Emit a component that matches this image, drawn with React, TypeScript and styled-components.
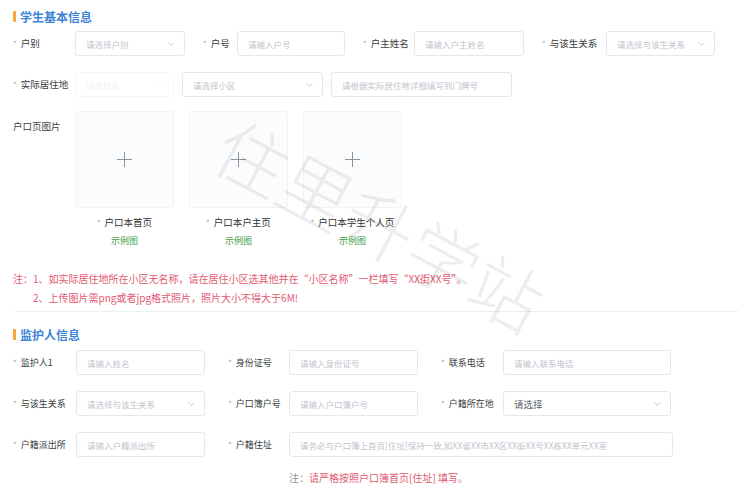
import React from 'react';
import styled, { createGlobalStyle } from 'styled-components';

const GlobalStyle = createGlobalStyle`
  html, body {
    margin: 0;
    padding: 0;
    background: #ffffff;
  }
  body {
    font-family: "Noto Sans CJK SC", "Noto Sans", "Liberation Sans", sans-serif;
    color: #303133;
  }
`;

const Page = styled.div`
  position: relative;
  width: 738px;
  height: 489px;
  overflow: hidden;
  box-sizing: border-box;
  padding: 9px 0 0 13px;
`;

const SectionTitle = styled.h3<{ $top?: number }>`
  display: flex;
  align-items: center;
  gap: 4px;
  margin: ${({ $top }) => $top ?? 0}px 0 0;
  height: 14px;
  font-size: 12px;
  font-weight: 700;
  color: #3d84d6;
  &::before {
    content: '';
    width: 3px;
    height: 11px;
    border-radius: 1px;
    background: #f3a93a;
  }
`;

const FormRow = styled.div<{ $top: number; $gap?: number }>`
  display: flex;
  align-items: center;
  margin-top: ${({ $top }) => $top}px;
  gap: ${({ $gap }) => $gap ?? 18}px;
`;

const Field = styled.div`
  display: flex;
  align-items: center;
`;

const Label = styled.label<{ $w: number; $size?: number }>`
  flex: none;
  width: ${({ $w }) => $w}px;
  font-size: ${({ $size }) => $size ?? 9.5}px;
  line-height: 14px;
  white-space: nowrap;
  color: #3a3c40;
`;

const Star = styled.span`
  color: #a0a4ab;
  font-size: 8px;
  margin-right: 4px;
`;

const TextInput = styled.input<{ $w: number }>`
  flex: none;
  width: ${({ $w }) => $w}px;
  height: 25px;
  box-sizing: border-box;
  padding: 0 10px;
  border: 1px solid #e4e7ed;
  border-radius: 3px;
  outline: none;
  background: #fff;
  font-family: inherit;
  font-size: 8.5px;
  color: #606266;
  &::placeholder {
    color: #c0c4cc;
  }
`;

const SelectBox = styled.div<{ $w: number; $faint?: boolean; $filled?: boolean }>`
  flex: none;
  display: flex;
  align-items: center;
  justify-content: space-between;
  width: ${({ $w }) => $w}px;
  height: 25px;
  box-sizing: border-box;
  padding: 0 9px 0 10px;
  border: 1px solid ${({ $faint }) => ($faint ? '#f6f7f9' : '#e4e7ed')};
  border-radius: 3px;
  font-size: ${({ $filled }) => ($filled ? 9.5 : 8.5)}px;
  color: ${({ $faint, $filled }) =>
    $faint ? '#f0f1f3' : $filled ? '#606266' : '#c0c4cc'};
  white-space: nowrap;
  overflow: hidden;
`;

const Chevron = ({ faint }: { faint?: boolean }) => (
  <svg width="7" height="4" viewBox="0 0 7 4" style={{ flex: 'none' }}>
    <polyline
      points="0.5,0.5 3.5,3.5 6.5,0.5"
      fill="none"
      stroke={faint ? '#f0f1f3' : '#c0c4cc'}
      strokeWidth="0.9"
    />
  </svg>
);

const UploadRow = styled.div`
  display: flex;
  align-items: flex-start;
  margin-top: 14px;
`;

const UploadLabel = styled(Label)`
  padding-top: 8px;
`;

const UploadList = styled.div`
  display: flex;
  gap: 15px;
`;

const UploadItem = styled.div`
  display: flex;
  flex-direction: column;
  align-items: center;
  width: 99px;
`;

const UploadBox = styled.div`
  display: flex;
  align-items: center;
  justify-content: center;
  width: 99px;
  height: 97px;
  box-sizing: border-box;
  border: 1px solid #f2f3f5;
  border-radius: 3px;
  background: #fbfcfd;
`;

const Caption = styled.div`
  margin-top: 7px;
  font-size: 9.5px;
  line-height: 14px;
  color: #303133;
  white-space: nowrap;
`;

const Sample = styled.div`
  margin-top: 4px;
  font-size: 9px;
  line-height: 14px;
  color: #43a047;
`;

const Plus = () => (
  <svg width="17" height="17" viewBox="0 0 17 17">
    <path d="M8.5 1v15M1 8.5h15" stroke="#8c939d" strokeWidth="1" />
  </svg>
);

const Notes = styled.div`
  display: flex;
  margin-top: 21px;
  font-size: 10px;
  line-height: 19px;
  color: #e25a71;
`;

const NoteHead = styled.span<{ $muted?: boolean }>`
  flex: none;
  width: 20px;
  color: ${({ $muted }) => ($muted ? '#909399' : 'inherit')};
`;

const NoteList = styled.div`
  display: flex;
  flex-direction: column;
`;

const Divider = styled.div`
  height: 1px;
  margin: 4px 0 0 2px;
  background: #ebeef5;
`;

const AddressNote = styled.div`
  display: flex;
  margin: 14px 0 0 276px;
  font-size: 10px;
  line-height: 14px;
  color: #e25a71;
`;

const Watermark = styled.div`
  position: absolute;
  left: 201px;
  top: 187px;
  width: 360px;
  height: 72px;
  transform: rotate(28deg);
  font-size: 72px;
  line-height: 72px;
  font-weight: 300;
  white-space: nowrap;
  color: rgba(0, 0, 0, 0.07);
  pointer-events: none;
`;

const Req = ({ children }: { children: React.ReactNode }) => (
  <>
    <Star>*</Star>
    {children}
  </>
);

const Select = ({
  w,
  text,
  faint,
  filled,
}: {
  w: number;
  text: string;
  faint?: boolean;
  filled?: boolean;
}) => (
  <SelectBox $w={w} $faint={faint} $filled={filled}>
    <span>{text}</span>
    <Chevron faint={faint} />
  </SelectBox>
);

const uploads = ['户口本首页', '户口本户主页', '户口本学生个人页'];

export default function App() {
  return (
    <>
      <GlobalStyle />
      <Page>
        <SectionTitle>学生基本信息</SectionTitle>

        <FormRow $top={8}>
          <Field>
            <Label $w={62}>
              <Req>户别</Req>
            </Label>
            <Select w={110} text="请选择户别" />
          </Field>
          <Field>
            <Label $w={34}>
              <Req>户号</Req>
            </Label>
            <TextInput $w={108} placeholder="请输入户号" readOnly />
          </Field>
          <Field>
            <Label $w={51}>
              <Req>户主姓名</Req>
            </Label>
            <TextInput $w={110} placeholder="请输入户主姓名" readOnly />
          </Field>
          <Field>
            <Label $w={64}>
              <Req>与该生关系</Req>
            </Label>
            <Select w={109} text="请选择与该生关系" />
          </Field>
        </FormRow>

        <FormRow $top={16} $gap={8}>
          <Field>
            <Label $w={62}>
              <Req>实际居住地</Req>
            </Label>
            <Select w={99} text="请选择区" faint />
          </Field>
          <Select w={141} text="请选择小区" />
          <TextInput
            $w={181}
            placeholder="请根据实际居住地详细填写到门牌号"
            readOnly
          />
        </FormRow>

        <UploadRow>
          <UploadLabel $w={62}>户口页图片</UploadLabel>
          <UploadList>
            {uploads.map((name) => (
              <UploadItem key={name}>
                <UploadBox>
                  <Plus />
                </UploadBox>
                <Caption>
                  <Req>{name}</Req>
                </Caption>
                <Sample>示例图</Sample>
              </UploadItem>
            ))}
          </UploadList>
        </UploadRow>

        <Notes>
          <NoteHead>注：</NoteHead>
          <NoteList>
            <span>
              1、如实际居住地所在小区无名称，请在居住小区选其他并在“小区名称”一栏填写“XX街XX号”。
            </span>
            <span>2、上传图片需png或者jpg格式照片，照片大小不得大于6M!</span>
          </NoteList>
        </Notes>
        <Divider />

        <SectionTitle $top={15}>监护人信息</SectionTitle>

        <FormRow $top={9} $gap={23}>
          <Field>
            <Label $w={63} $size={9}>
              <Req>监护人1</Req>
            </Label>
            <TextInput $w={129} placeholder="请输入姓名" readOnly />
          </Field>
          <Field>
            <Label $w={61} $size={9}>
              <Req>身份证号</Req>
            </Label>
            <TextInput $w={129} placeholder="请输入身份证号" readOnly />
          </Field>
          <Field>
            <Label $w={62} $size={9}>
              <Req>联系电话</Req>
            </Label>
            <TextInput $w={168} placeholder="请输入联系电话" readOnly />
          </Field>
        </FormRow>

        <FormRow $top={16} $gap={23}>
          <Field>
            <Label $w={63} $size={9}>
              <Req>与该生关系</Req>
            </Label>
            <Select w={129} text="请选择与该生关系" />
          </Field>
          <Field>
            <Label $w={61} $size={9}>
              <Req>户口簿户号</Req>
            </Label>
            <TextInput $w={129} placeholder="请输入户口簿户号" readOnly />
          </Field>
          <Field>
            <Label $w={62} $size={9}>
              <Req>户籍所在地</Req>
            </Label>
            <Select w={168} text="请选择" filled />
          </Field>
        </FormRow>

        <FormRow $top={16} $gap={23}>
          <Field>
            <Label $w={63} $size={9}>
              <Req>户籍派出所</Req>
            </Label>
            <TextInput $w={129} placeholder="请输入户籍派出所" readOnly />
          </Field>
          <Field>
            <Label $w={61} $size={9}>
              <Req>户籍住址</Req>
            </Label>
            <TextInput
              $w={384}
              placeholder="请务必与户口簿上首页[住址]保持一致,如XX省XX市XX区XX街XX号XX栋XX单元XX室"
              readOnly
            />
          </Field>
        </FormRow>

        <AddressNote>
          <NoteHead $muted>注：</NoteHead>
          <span>请严格按照户口簿首页[住址] 填写。</span>
        </AddressNote>

        <FormRow $top={4}>
          <Field>
            <Label $w={64} $size={9} />
            <TextInput $w={98} readOnly />
          </Field>
        </FormRow>

        <Watermark>住里升学站</Watermark>
      </Page>
    </>
  );
}
